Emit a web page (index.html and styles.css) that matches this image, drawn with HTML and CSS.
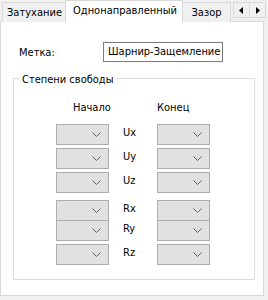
FILE: index.html
```html
<!DOCTYPE html>
<html lang="ru">
<head>
	<meta charset="UTF-8">
	<title>Однонаправленный</title>
	<link rel="stylesheet" href="styles.css">
</head>
<body>
	<div class="tabs">
		<div class="tab first">Затухание</div>
		<div class="tab active">Однонаправленный</div>
		<div class="tab last">Зазор</div>
		<div class="scroll">
			<span class="arrow"><svg width="5" height="7" viewBox="0 0 5 7"><path d="M4 0v7L0 3.5z" fill="#000"/></svg></span>
			<span class="arrow"><svg width="5" height="7" viewBox="0 0 5 7"><path d="M1 0v7l4-3.5z" fill="#000"/></svg></span>
		</div>
	</div>
	<div class="panel">
		<div class="label-row">
			<span class="label">Метка:</span>
			<span class="textbox">Шарнир-Защемление</span>
		</div>
		<fieldset class="group">
			<legend>Степени свободы</legend>
			<div class="grid">
				<div class="head start">Начало</div>
				<div></div>
				<div class="head">Конец</div>

				<div class="combo"></div><div class="dof">Ux</div><div class="combo"></div>
				<div class="combo"></div><div class="dof">Uy</div><div class="combo"></div>
				<div class="combo"></div><div class="dof">Uz</div><div class="combo"></div>
				<div class="combo sep"></div><div class="dof sep">Rx</div><div class="combo sep"></div>
				<div class="combo"></div><div class="dof">Ry</div><div class="combo"></div>
				<div class="combo"></div><div class="dof">Rz</div><div class="combo"></div>
			</div>
		</fieldset>
	</div>
</body>
</html>
```

FILE: styles.css
```css
* {
	margin: 0;
	padding: 0;
	box-sizing: border-box;
}
body {
	width: 268px;
	height: 300px;
	background: #f0f0f0;
	font-family: "DejaVu Sans", "Liberation Sans", sans-serif;
	font-stretch: condensed;
	font-size: 11px;
	color: #000;
	overflow: hidden;
}
.tabs {
	display: flex;
	align-items: flex-end;
	height: 22px;
	padding-left: 2px;
	position: relative;
	z-index: 1;
}
.tab {
	height: 20px;
	line-height: 20px;
	border: 1px solid #d9d9d9;
	border-bottom: none;
	background: #f0f0f0;
	margin-right: -1px;
	text-align: center;
	white-space: nowrap;
}
.tab.first {
	width: 65px;
}
.tab.last {
	width: 49px;
}
.tab.active {
	width: 118px;
	height: 23px;
	line-height: 20px;
	margin: 0 -1px -1px -1px;
	padding-left: 2px;
	background: #fff;
	position: relative;
	z-index: 2;
}
.scroll {
	display: flex;
	margin-left: auto;
	margin-right: 2px;
	align-self: flex-start;
	margin-top: 2px;
}
.arrow {
	width: 17px;
	height: 16px;
	border: 1px solid #d9d9d9;
	background: #f0f0f0;
	display: flex;
	align-items: center;
	justify-content: center;
	margin-left: -1px;
}
.panel {
	width: 264px;
	height: 275px;
	background: #fff;
	border: 1px solid #d9d9d9;
	margin-top: -1px;
	padding: 20px 8px 0 12px;
}
.label-row {
	display: flex;
	align-items: center;
	height: 20px;
}
.label {
	width: 90px;
	padding-left: 6px;
}
.textbox {
	height: 20px;
	width: 120px;
	border: 1px solid #7a7a7a;
	padding-left: 4px;
	line-height: 18px;
	white-space: nowrap;
}
.group {
	border: 1px solid #dcdcdc;
	margin-top: 7px;
	height: 211px;
	padding: 0;
}
.group legend {
	margin-left: 6px;
	padding: 4px 2px 0;
	line-height: 14px;
}
.grid {
	display: grid;
	grid-template-columns: 53px 48px 53px;
	grid-template-rows: 20px;
	grid-auto-rows: 21px;
	row-gap: 3px;
	margin: 14px 0 0 42px;
}
.head {
	line-height: 14px;
}
.head.start {
	padding-left: 17px;
}
.combo {
	background: #e1e1e1 url("data:image/svg+xml,%3Csvg xmlns='http://www.w3.org/2000/svg' width='9' height='5'%3E%3Cpath d='M0.5 0.5l4 4 4-4' fill='none' stroke='%23606060'/%3E%3C/svg%3E") no-repeat right 7px center;
	border: 1px solid #adadad;
}
.dof {
	padding-left: 14px;
	line-height: 18px;
}
.sep {
	margin-top: 4px;
	margin-bottom: -4px;
}
```
